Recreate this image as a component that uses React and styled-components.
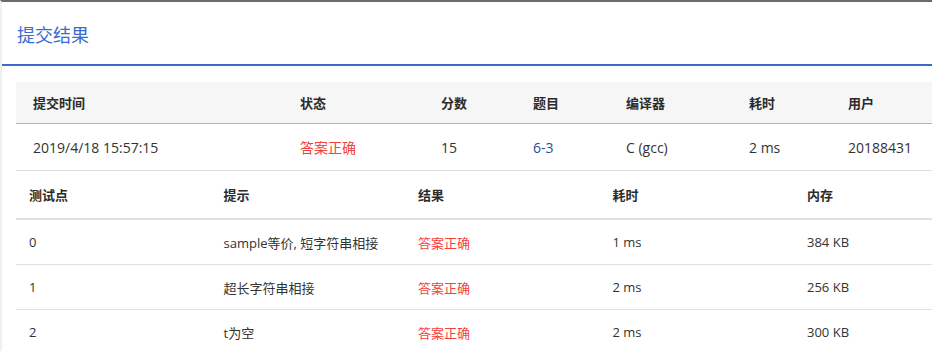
import React from 'react'
import styled, { createGlobalStyle } from 'styled-components'

const GlobalStyle = createGlobalStyle`
  html, body {
    margin: 0;
    padding: 0;
    background: #fff;
  }
  body {
    font-family: "Segoe UI", "Open Sans", "Noto Sans CJK SC", sans-serif;
    color: #333;
  }
`

const Panel = styled.section`
  width: 100%;
  height: 351px;
  overflow: hidden;
  box-sizing: border-box;
  border-top: 2px solid #6b6b6b;
  border-left: 2px solid #f0f0f0;
  background: #fff;
`

const PanelHead = styled.header`
  display: flex;
  align-items: center;
  padding-left: 15px;
  border-bottom: 2px solid #3b6bc8;
  box-sizing: border-box;
  height: 64px;
`

const PanelTitle = styled.h3`
  margin: 0;
  font-size: 18px;
  font-weight: 400;
  color: #3a6bcf;
  font-family: "Noto Sans CJK SC", sans-serif;
  padding-top: 2px;
`

const PanelBody = styled.div`
  padding: 16px 0 0 14px;
  width: 1000px;
  display: flex;
  flex-direction: column;
`

const SummaryRow = styled.div`
  display: grid;
  grid-template-columns: 267px 141px 92px 93px 123px 99px 157px;
  height: ${p => (p.$head ? '41px' : '46px')};
  align-items: center;
  background: ${p => (p.$head ? '#f6f6f6' : '#fff')};
  border-bottom: 1px solid ${p => (p.$head ? '#b4b4b4' : '#dedede')};
`

const CaseRow = styled.div`
  display: grid;
  grid-template-columns: repeat(5, 194.5px);
  height: ${p => (p.$head ? '47px' : '44px')};
  align-items: center;
  border-bottom: ${p => (p.$head ? '2px solid #dee2e6' : '1px solid #dee2e6')};
`

const Cell = styled.div`
  padding-left: ${p => p.$pad || 17}px;
  font-size: ${p => (p.$head ? '13px' : p.$size || '14px')};
  font-weight: ${p => (p.$head ? 700 : 400)};
  color: ${p => p.$color || (p.$head ? '#2b2b2b' : '#333')};
  white-space: nowrap;
`

const Accepted = styled.span`
  color: #f5413a;
  font-family: "Noto Sans CJK SC", sans-serif;
`

const ProblemLink = styled.a`
  color: #1f5398;
  text-decoration: none;
`

const summaryHead = ['提交时间', '状态', '分数', '题目', '编译器', '耗时', '用户']

const cases = [
  ['0', 'sample等价, 短字符串相接', '1 ms', '384 KB'],
  ['1', '超长字符串相接', '2 ms', '256 KB'],
  ['2', 't为空', '2 ms', '300 KB'],
]

export default function App() {
  return (
    <>
      <GlobalStyle />
      <Panel>
        <PanelHead>
          <PanelTitle>提交结果</PanelTitle>
        </PanelHead>
        <PanelBody>
          <SummaryRow $head>
            {summaryHead.map(h => (
              <Cell $head key={h}>{h}</Cell>
            ))}
          </SummaryRow>
          <SummaryRow>
            <Cell>2019/4/18 15:57:15</Cell>
            <Cell><Accepted>答案正确</Accepted></Cell>
            <Cell>15</Cell>
            <Cell><ProblemLink href="#">6-3</ProblemLink></Cell>
            <Cell>C (gcc)</Cell>
            <Cell>2 ms</Cell>
            <Cell>20188431</Cell>
          </SummaryRow>
          <CaseRow $head>
            {['测试点', '提示', '结果', '耗时', '内存'].map(h => (
              <Cell $head $pad={13} key={h}>{h}</Cell>
            ))}
          </CaseRow>
          {cases.map(([id, hint, time, mem]) => (
            <CaseRow key={id}>
              <Cell $pad={13} $size="13px">{id}</Cell>
              <Cell $pad={13} $size="13px">{hint}</Cell>
              <Cell $pad={13} $size="13px"><Accepted>答案正确</Accepted></Cell>
              <Cell $pad={13} $size="13px">{time}</Cell>
              <Cell $pad={13} $size="13px">{mem}</Cell>
            </CaseRow>
          ))}
        </PanelBody>
      </Panel>
    </>
  )
}
